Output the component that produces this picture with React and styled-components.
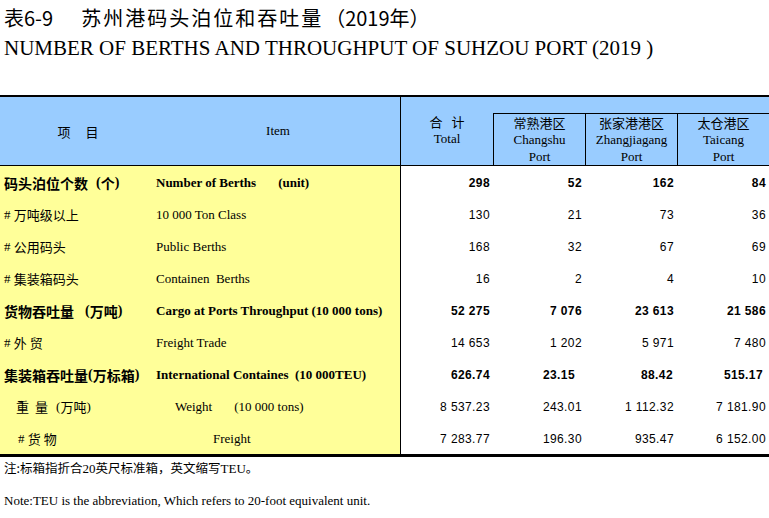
import React from 'react';
import styled, { createGlobalStyle } from 'styled-components';

const GlobalStyle = createGlobalStyle`
  html, body {
    margin: 0;
    padding: 0;
    background: #ffffff;
    overflow: hidden;
  }
  body {
    font-family: "Liberation Serif", "Noto Sans CJK SC", serif;
    color: #000;
  }
`;

const COLS = '156px 244px 93px 92px 92px 92px';
const SERIF = '"Liberation Serif", "Noto Sans CJK SC", serif';
const CJK = '"Noto Sans CJK SC", "Liberation Sans", sans-serif';

const Page = styled.div`
  width: 769px;
`;

const TitleBlock = styled.div`
  height: 95px;
  padding: 4px 0 0 4px;
  box-sizing: border-box;
`;

const TitleCn = styled.div`
  font-family: ${CJK};
  font-size: 20px;
  line-height: 28px;
  letter-spacing: 2px;
  white-space: nowrap;
`;

const TitleNo = styled.span`
  letter-spacing: 0;
  margin-right: 28px;
`;

const TitleYear = styled.span`
  letter-spacing: 0;
  margin-left: 2px;
`;

const TitleEn = styled.div`
  font-family: ${SERIF};
  font-size: 21px;
  line-height: 32px;
  white-space: nowrap;
`;

const Table = styled.div`
  border-top: 2px solid #000;
  border-bottom: 3px solid #000;
`;

const Head = styled.div`
  display: grid;
  grid-template-columns: ${COLS};
  grid-template-rows: 16px 52px;
  background: #99ccff;
  border-bottom: 1px solid #000;
`;

const HeadCell = styled.div`
  grid-row: 1 / 3;
  display: flex;
  align-items: center;
  justify-content: center;
  font-family: ${({ cjk }) => (cjk ? CJK : SERIF)};
  font-size: 13px;
  word-spacing: ${({ cjk }) => (cjk ? '12px' : '0')};
`;

const TotalCell = styled.div`
  grid-row: 1 / 3;
  border-left: 1px solid #000;
  padding-top: 16px;
  text-align: center;
  line-height: 17px;
`;

const PortCell = styled.div`
  grid-row: 2;
  border-left: 1px solid #000;
  border-top: 1px solid #000;
  text-align: center;
  line-height: 17px;
`;

const Cn = styled.div`
  font-family: ${CJK};
  font-size: 13px;
  word-spacing: ${({ spread }) => spread || 0}px;
`;

const En = styled.div`
  font-family: ${SERIF};
  font-size: 13px;
`;

const Row = styled.div`
  display: grid;
  grid-template-columns: ${COLS};
  height: 32px;
  font-weight: ${({ bold }) => (bold ? 700 : 400)};
`;

const LabelCn = styled.div`
  background: #ffff99;
  display: flex;
  align-items: center;
  padding-left: ${({ indent }) => indent || 4}px;
  font-family: ${SERIF};
  font-size: ${({ bold }) => (bold ? '14px' : '13px')};
  white-space: pre;
  padding-top: 1px;
`;

const Hanzi = styled.span`
  font-family: ${CJK};
`;

const LabelEn = styled.div`
  background: #ffff99;
  display: flex;
  align-items: center;
  padding-left: ${({ indent }) => indent || 0}px;
  font-family: ${SERIF};
  font-size: 13px;
  white-space: pre;
  padding-top: 1px;
`;

const Gap = styled.span`
  display: inline-block;
  width: ${({ w }) => w}px;
`;

const Num = styled.div`
  display: flex;
  align-items: center;
  justify-content: flex-end;
  padding-right: ${({ pad }) => pad}px;
  border-left: ${({ first }) => (first ? '1px solid #000' : 'none')};
  font-family: "Liberation Sans", Arial, sans-serif;
  font-size: 12px;
  letter-spacing: 0.4px;
  padding-top: 1px;
`;

const Notes = styled.div`
  padding: 2px 0 0 4px;
`;

const NoteCn = styled.div`
  font-family: ${SERIF};
  font-size: 13px;
  line-height: 18px;
  white-space: nowrap;
`;

const NoteHan = styled.span`
  font-family: ${CJK};
  font-size: 12.5px;
`;

const NoteEn = styled.div`
  font-family: ${SERIF};
  font-size: 13px;
  line-height: 18px;
  margin-top: 14px;
  white-space: nowrap;
`;

const rows = [
  {
    bold: true,
    cn: [['码头泊位个数'], 'gap8', '(', ['个'], ')'],
    en: ['Number of Berths', 'gap22', '(unit)'],
    vals: ['298', '52', '162', '84'],
  },
  { cn: ['# ', ['万吨级以上']], en: ['10 000 Ton Class'], vals: ['130', '21', '73', '36'] },
  { cn: ['# ', ['公用码头']], en: ['Public Berths'], vals: ['168', '32', '67', '69'] },
  { cn: ['# ', ['集装箱码头']], en: ['Containen  Berths'], vals: ['16', '2', '4', '10'] },
  {
    bold: true,
    cn: [['货物吞吐量'], 'gap11', '(', ['万吨'], ')'],
    en: ['Cargo at Ports Throughput (10 000 tons)'],
    vals: ['52 275', '7 076', '23 613', '21 586'],
  },
  { cn: ['# ', ['外 贸']], en: ['Freight Trade'], vals: ['14 653', '1 202', '5 971', '7 480'] },
  {
    bold: true,
    cn: [['集装箱吞吐量'], '(', ['万标箱'], ')'],
    en: ['International Containes  (10 000TEU)'],
    vals: ['626.74', '23.15', '88.42', '515.17'],
    pads: [3, 10, 4, 6],
  },
  {
    cn: [['重'], 'gap6', ['量'], 'gap8', '(', ['万吨'], ')'],
    indent: 16,
    en: ['Weight', 'gap22', '(10 000 tons)'],
    enIndent: 19,
    vals: ['8 537.23', '243.01', '1 112.32', '7 181.90'],
  },
  {
    cn: ['# ', ['货 物']],
    indent: 18,
    en: ['Freight'],
    enIndent: 57,
    vals: ['7 283.77', '196.30', '935.47', '6 152.00'],
  },
];

const ports = [
  { cn: '常熟港区', en: ['Changshu', 'Port'] },
  { cn: '张家港港区', en: ['Zhangjiagang', 'Port'] },
  { cn: '太仓港区', en: ['Taicang', 'Port'] },
];

const renderParts = parts =>
  parts.map((p, i) => {
    if (Array.isArray(p)) return <Hanzi key={i}>{p[0]}</Hanzi>;
    if (p.startsWith('gap')) return <Gap key={i} w={Number(p.slice(3))} />;
    return <span key={i}>{p}</span>;
  });

export default function App() {
  return (
    <Page>
      <GlobalStyle />
      <TitleBlock>
        <TitleCn>
          <TitleNo>表6-9</TitleNo>苏州港码头泊位和吞吐量<TitleYear>（2019年）</TitleYear>
        </TitleCn>
        <TitleEn>NUMBER OF BERTHS AND THROUGHPUT OF SUHZOU PORT (2019 )</TitleEn>
      </TitleBlock>

      <Table>
        <Head>
          <HeadCell cjk>项 目</HeadCell>
          <HeadCell>Item</HeadCell>
          <TotalCell>
            <Cn spread={6}>合 计</Cn>
            <En>Total</En>
          </TotalCell>
          {ports.map(p => (
            <PortCell key={p.cn}>
              <Cn>{p.cn}</Cn>
              {p.en.map(t => (
                <En key={t}>{t}</En>
              ))}
            </PortCell>
          ))}
        </Head>

        {rows.map((r, i) => (
          <Row key={i} bold={r.bold}>
            <LabelCn indent={r.indent} bold={r.bold}>{renderParts(r.cn)}</LabelCn>
            <LabelEn indent={r.enIndent}>{renderParts(r.en)}</LabelEn>
            {r.vals.map((v, j) => (
              <Num key={j} first={j === 0} pad={r.pads ? r.pads[j] : 3}>
                {v}
              </Num>
            ))}
          </Row>
        ))}
      </Table>

      <Notes>
        <NoteCn>
          <NoteHan>注:标箱指折合</NoteHan>20<NoteHan>英尺标准箱，英文缩写</NoteHan>TEU<NoteHan>。</NoteHan>
        </NoteCn>
        <NoteEn>Note:TEU is the abbreviation, Which refers to 20-foot equivalent unit.</NoteEn>
      </Notes>
    </Page>
  );
}
